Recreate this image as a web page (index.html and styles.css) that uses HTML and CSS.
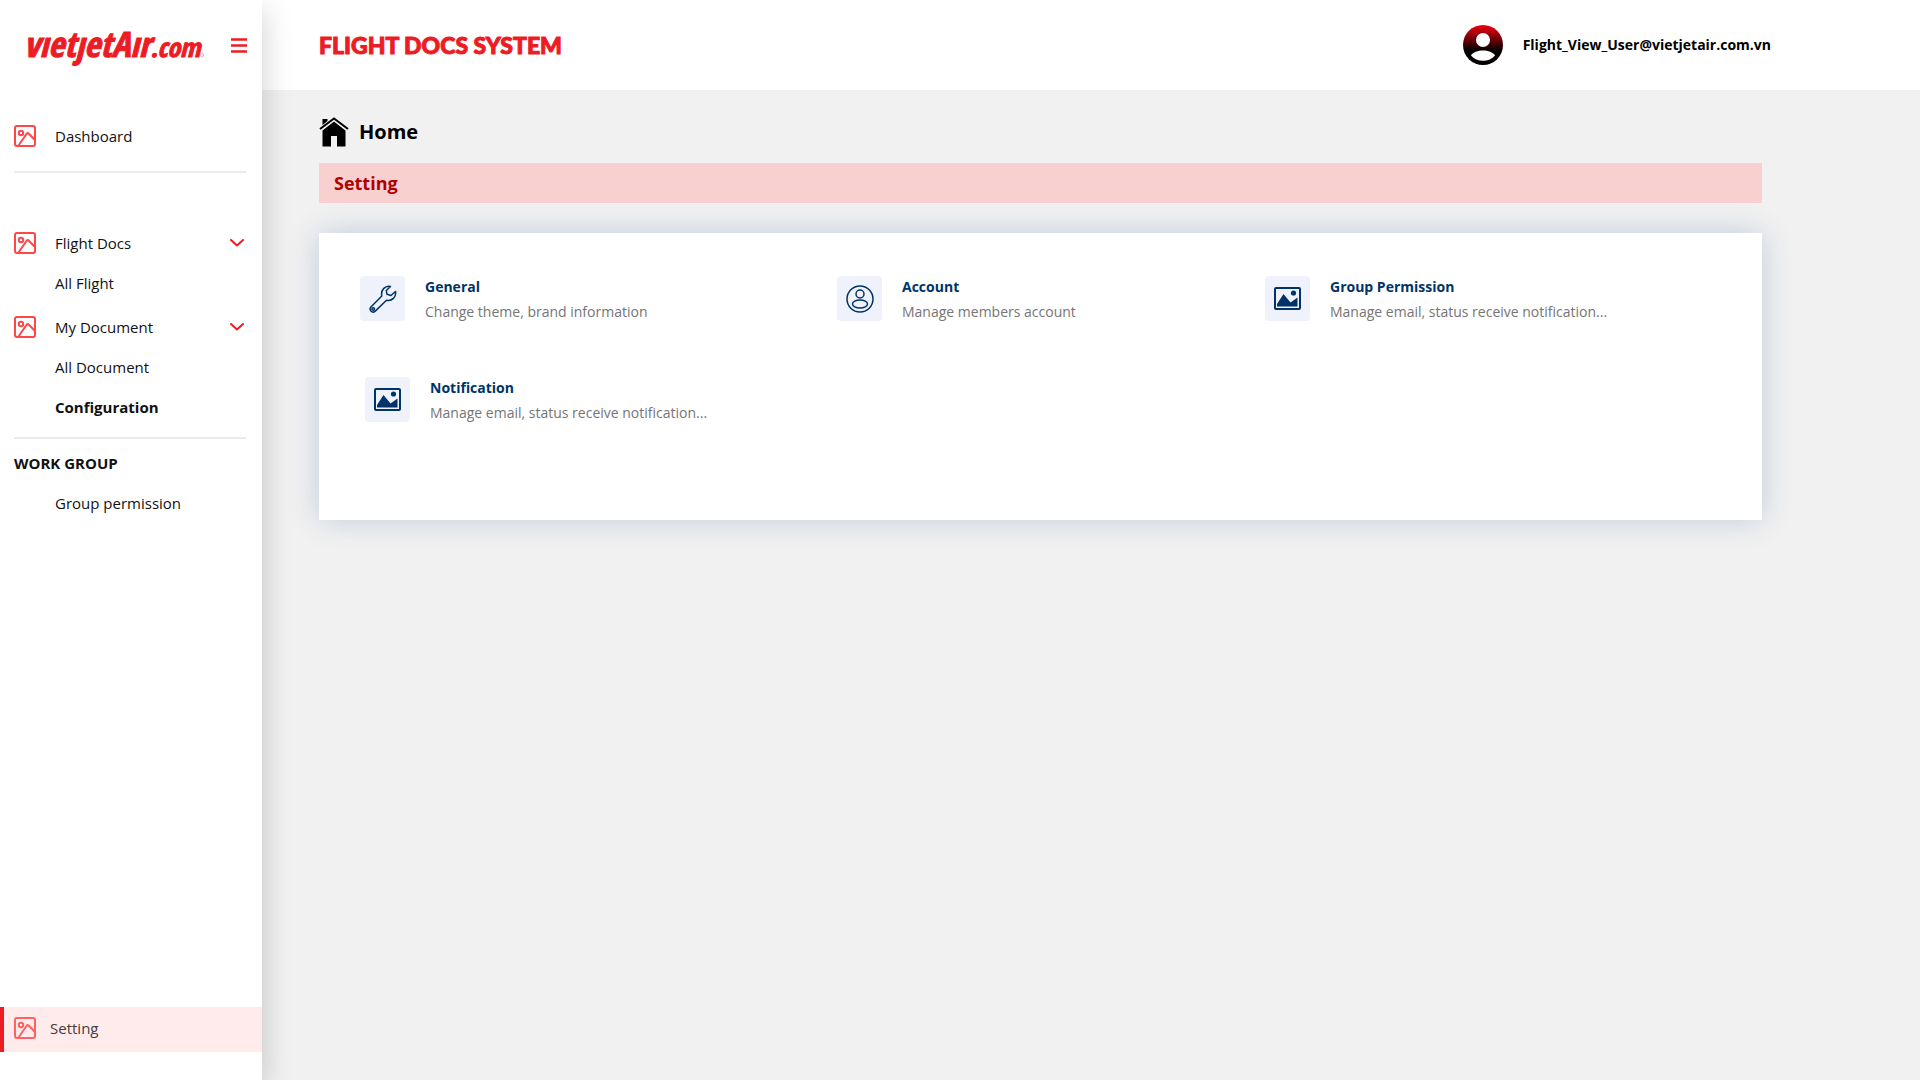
FILE: index.html
```html
<!DOCTYPE html>
<html lang="en">
<head>
<meta charset="utf-8">
<title>Flight Docs System</title>
<link rel="stylesheet" href="styles.css">
</head>
<body>
<svg class="sprite" aria-hidden="true">
  <symbol id="picture" viewBox="0 0 22 22">
    <g fill="none" stroke="currentColor" stroke-width="2" stroke-linejoin="round">
      <rect x="1" y="1" width="20" height="20" rx="2"/>
      <circle cx="7" cy="8" r="2.200"/>
      <path d="M4.500 20.500 12.800 8.500q.9-1 1.800 0L20.500 14.500"/>
    </g>
  </symbol>
  <symbol id="chevron" viewBox="0 0 14 8">
    <path d="M1 1l6 5.500L13 1" fill="none" stroke="currentColor" stroke-width="2" stroke-linecap="round" stroke-linejoin="round"/>
  </symbol>
  <symbol id="landscape" viewBox="0 0 27 23">
    <rect x="1" y="1" width="25" height="21" rx="1" fill="none" stroke="currentColor" stroke-width="2"/>
    <circle cx="19.500" cy="6" r="2.600" fill="currentColor"/>
    <path d="M3 19.500V17L9.500 7l7 8.500 7-5V19.500z" fill="currentColor"/>
  </symbol>
</svg>
<div class="app">
  <aside class="sidebar">
    <div class="brand">
      <a class="logo" href="#">vıetȷetAır<span class="logo-domain">.com</span><span class="logo-mark"></span></a>
      <button class="menu-button" type="button" aria-label="Toggle menu">
        <svg width="16" height="15" viewBox="0 0 16 15"><path d="M0 1.500h16M0 7.500h16M0 13.500h16" stroke="currentColor" stroke-width="2.400"/></svg>
      </button>
    </div>
    <nav class="nav">
      <a class="nav-item" href="#"><svg class="nav-icon"><use href="#picture"/></svg>Dashboard</a>
      <hr class="divider divider-wide">
      <button class="nav-item" type="button"><svg class="nav-icon"><use href="#picture"/></svg>Flight Docs<svg class="chevron"><use href="#chevron"/></svg></button>
      <a class="nav-sub" href="#">All Flight</a>
      <button class="nav-item" type="button"><svg class="nav-icon"><use href="#picture"/></svg>My Document<svg class="chevron"><use href="#chevron"/></svg></button>
      <a class="nav-sub" href="#">All Document</a>
      <a class="nav-sub nav-current" href="#">Configuration</a>
      <hr class="divider">
      <h2 class="nav-heading">WORK GROUP</h2>
      <a class="nav-sub" href="#">Group permission</a>
    </nav>
    <a class="setting-link" href="#"><svg class="nav-icon"><use href="#picture"/></svg>Setting</a>
  </aside>
  <div class="page">
    <header class="topbar">
      <h1 class="title">FLIGHT DOCS SYSTEM</h1>
      <div class="user">
        <svg width="40" height="40" viewBox="0 0 40 40" aria-hidden="true">
          <defs><linearGradient id="avatar-fill" x1="0" y1="0" x2="0" y2="1"><stop offset="0" stop-color="#f00010"/><stop offset=".65" stop-color="#000"/></linearGradient></defs>
          <circle cx="20" cy="20" r="20" fill="url(#avatar-fill)"/>
          <circle cx="20" cy="15" r="7" fill="#fff"/>
          <path d="M8 30.500c4-6.600 20-6.600 24 0-5.500 7-18.500 7-24 0z" fill="#fff"/>
        </svg>
        <span>Flight_View_User@vietjetair.com.vn</span>
      </div>
    </header>
    <main class="content">
      <a class="home" href="#">
        <svg width="30" height="30" viewBox="0 0 30 30" aria-hidden="true">
          <path d="M3.500 2h5v4L3.500 10zM15 4.500 26.500 13.500V29.500H18V19H12V29.500H3.500V13.500z"/>
          <path d="M1 12.500 15 1.500 29 12.500" fill="none" stroke="#f1f1f1" stroke-width="4"/>
          <path d="M1 12 15 1.500 29 12" fill="none" stroke="#000" stroke-width="2"/>
        </svg>
        Home
      </a>
      <h2 class="section-title">Setting</h2>
      <section class="card">
        <a class="option" href="#">
          <span class="tile"><svg width="28" height="28" viewBox="0 0 28 28" fill="none" stroke="currentColor" stroke-width="1.500" stroke-linejoin="round"><path d="M21.500 1.500C16 .5 11.500 5 12.800 11L1.700 22.200c-2 3 1.500 6.200 4.300 4.200L17.500 15.200C23 16.500 27.500 12 26.500 6.500L22 10.500 18 9.300 17.300 5.500z"/><circle cx="4.200" cy="24" r="1.300"/></svg></span>
          <span class="option-text"><strong>General</strong><span>Change theme, brand information</span></span>
        </a>
        <a class="option" href="#">
          <span class="tile"><svg width="28" height="28" viewBox="0 0 28 28" fill="none" stroke="currentColor" stroke-width="1.500"><circle cx="14" cy="14" r="13"/><circle cx="14" cy="9" r="4"/><ellipse cx="14" cy="19" rx="7.500" ry="4"/></svg></span>
          <span class="option-text"><strong>Account</strong><span>Manage members account</span></span>
        </a>
        <a class="option" href="#">
          <span class="tile"><svg width="27" height="23"><use href="#landscape"/></svg></span>
          <span class="option-text"><strong>Group Permission</strong><span>Manage email, status receive notification...</span></span>
        </a>
        <a class="option option-indent" href="#">
          <span class="tile"><svg width="27" height="23"><use href="#landscape"/></svg></span>
          <span class="option-text"><strong>Notification</strong><span>Manage email, status receive notification...</span></span>
        </a>
      </section>
    </main>
  </div>
</div>
</body>
</html>
```
FILE: styles.css
```css
* { box-sizing: border-box; }

body {
  margin: 0;
  background: #f1f1f1;
  color: #111;
  font: 15px/24px "Open Sans", "Noto Sans", sans-serif;
}

a { color: inherit; text-decoration: none; }
button { padding: 0; border: 0; background: none; color: inherit; font: inherit; text-align: left; cursor: pointer; }
h1, h2 { margin: 0; }
svg { flex: none; }

.sprite { position: absolute; width: 0; height: 0; }

.app { display: grid; grid-template-columns: 262px 1fr; min-height: 100vh; }

.sidebar {
  z-index: 1;
  display: flex;
  flex-direction: column;
  padding-bottom: 28px;
  background: #fff;
  box-shadow: 0 10px 30px rgba(0, 0, 0, .2);
}

.brand { display: flex; align-items: center; justify-content: space-between; height: 90px; padding: 0 15px 0 24px; color: #ed1c24; }
.logo { display: flex; align-items: baseline; font: italic 800 35px/40px "Open Sans Condensed", "Roboto Condensed", "Roboto", sans-serif; -webkit-text-stroke: 1px currentColor; }
.logo-domain { font-size: 26px; }
.logo-mark { width: 4px; height: 4px; border: 1px solid #f7a5a8; border-radius: 50%; }
.menu-button { display: flex; color: #ed1c24; }

.nav { display: flex; flex-direction: column; flex: 1; padding: 22px 16px 0 14px; }
.nav-item { display: flex; align-items: center; height: 40px; margin-top: 4px; gap: 19px; }
.nav-icon { width: 22px; height: 22px; color: #ff4747; }
.chevron { width: 14px; height: 8px; margin: 0 2px 0 auto; color: #ed1c24; }
.nav-sub { height: 40px; padding-left: 41px; line-height: 40px; }
.nav-current { font-weight: 700; }
.divider { width: 100%; height: 2px; margin: 10px 0 4px; border: 0; background: #ebebeb; }
.divider-wide { margin: 15px 0 46px; }
.nav-heading { font-size: 15px; line-height: 40px; }

.setting-link {
  display: flex;
  align-items: center;
  gap: 14px;
  height: 45px;
  padding: 0 0 4px 10px;
  border-left: 4px solid #ed1c24;
  background: #ffebeb;
  color: #443e3e;
}
.setting-link .nav-icon { color: #ff6262; }

.topbar { display: flex; align-items: center; justify-content: space-between; height: 90px; padding: 0 149px 0 57px; background: #fff; }
.title { color: #ed1c24; font: 900 23px/32px Lato, sans-serif; -webkit-text-stroke: 1px currentColor; }
.user { display: flex; align-items: center; gap: 20px; color: #000; font-size: 14px; font-weight: 700; }

.content { padding: 26px 158px 40px 57px; }
.home { display: flex; align-items: center; gap: 10px; height: 32px; color: #000; font-size: 20px; font-weight: 700; }
.section-title { margin-top: 15px; padding: 0 15px; background: #f8d0d0; color: #b00000; font-size: 18px; font-weight: 700; line-height: 40px; }

.card {
  display: grid;
  grid-template-columns: 477fr 428fr 497fr;
  grid-auto-rows: 45px;
  row-gap: 56px;
  min-height: 287px;
  margin-top: 30px;
  padding: 43px 0 43px 41px;
  background: #fff;
  box-shadow: 0 0 30px rgba(0, 63, 140, .2);
}
.option { display: flex; gap: 20px; color: #003468; }
.option-indent { padding-left: 5px; }
.tile { display: flex; align-items: center; justify-content: center; width: 45px; height: 45px; border-radius: 4px; background: #eff2fa; }
.option-text { display: flex; flex-direction: column; margin-top: -2px; font-size: 14px; line-height: 25px; }
.option-text strong { font-weight: 700; }
.option-text span { color: #757575; }
```
